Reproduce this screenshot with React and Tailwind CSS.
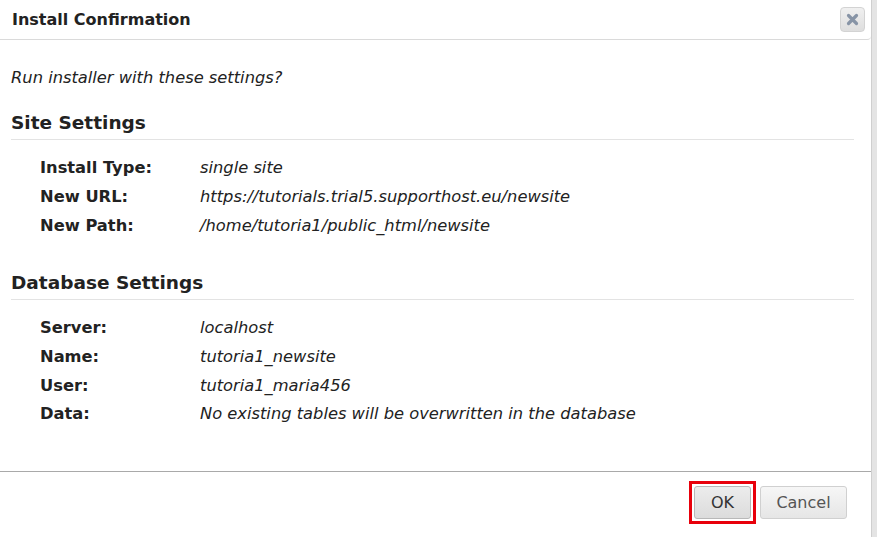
const siteRows = [
  ['Install Type:', 'single site'],
  ['New URL:', 'https://tutorials.trial5.supporthost.eu/newsite'],
  ['New Path:', '/home/tutoria1/public_html/newsite'],
];

const dbRows = [
  ['Server:', 'localhost'],
  ['Name:', 'tutoria1_newsite'],
  ['User:', 'tutoria1_maria456'],
  ['Data:', 'No existing tables will be overwritten in the database'],
];

function Section({ title, rows }) {
  return (
    <div>
      <h2 className="text-[18.5px] font-bold leading-[24px] text-[#222] pt-[1px] pb-[4px] border-b border-[#e3e3e3] mr-[17px]">
        {title}
      </h2>
      <div className="pl-[29px] pt-[14px]">
        {rows.map(([label, value]) => (
          <div key={label} className="flex h-[28.7px] items-center text-[16.3px] leading-[20px]">
            <div className="w-[160px] font-bold text-[#222]">{label}</div>
            <div className="italic text-[#222]">{value}</div>
          </div>
        ))}
      </div>
    </div>
  );
}

export default function App() {
  return (
    <div
      className="flex w-[877px] h-[537px] bg-white overflow-hidden"
      style={{ fontFamily: '"DejaVu Sans", Verdana, sans-serif' }}
    >
      <div className="flex flex-col w-[872px] h-full border-r border-[#cfcfcf]">
        {/* header */}
        <div className="flex items-center justify-between h-[40px] pl-[12px] pr-[6px] border-b border-[#dadada] rounded-br-[4px]">
          <span className="text-[16px] font-bold text-[#222]">Install Confirmation</span>
          <button
            type="button"
            aria-label="Close"
            className="flex items-center justify-center w-[25px] h-[25px] rounded-[4px] border border-[#d3d3d3] bg-gradient-to-b from-[#f0f0f0] to-[#dedede]"
          >
            <svg width="13" height="13" viewBox="0 0 13 13">
              <path d="M2.5 2.5 L10.5 10.5 M10.5 2.5 L2.5 10.5" stroke="#8794a6" strokeWidth="3.2" strokeLinecap="round" />
            </svg>
          </button>
        </div>

        {/* body */}
        <div className="flex-1 pl-[11px]">
          <p className="mt-[28px] text-[16.3px] leading-[20px] italic text-[#222]">Run installer with these settings?</p>
          <div className="mt-[22px]">
            <Section title="Site Settings" rows={siteRows} />
          </div>
          <div className="mt-[30px]">
            <Section title="Database Settings" rows={dbRows} />
          </div>
        </div>

        {/* footer */}
        <div className="flex items-start justify-end gap-[4px] h-[66px] border-t border-[#a9a9a9] pt-[9px] pr-[24px]">
          <div className="border-[3px] border-[#e8000b] p-[2px]">
            <button
              type="button"
              className="w-[57px] h-[33px] rounded-[3px] border border-[#b8b8b8] bg-gradient-to-b from-[#ececec] to-[#dcdcdc] text-[16px] text-[#333]"
            >
              OK
            </button>
          </div>
          <button
            type="button"
            className="mt-[5px] w-[87px] h-[33px] rounded-[3px] border border-[#d0d0d0] bg-gradient-to-b from-[#f6f6f6] to-[#e6e6e6] text-[16px] text-[#555]"
          >
            Cancel
          </button>
        </div>
      </div>
      <div className="flex-1 bg-[#e4e4e4]" />
    </div>
  );
}
